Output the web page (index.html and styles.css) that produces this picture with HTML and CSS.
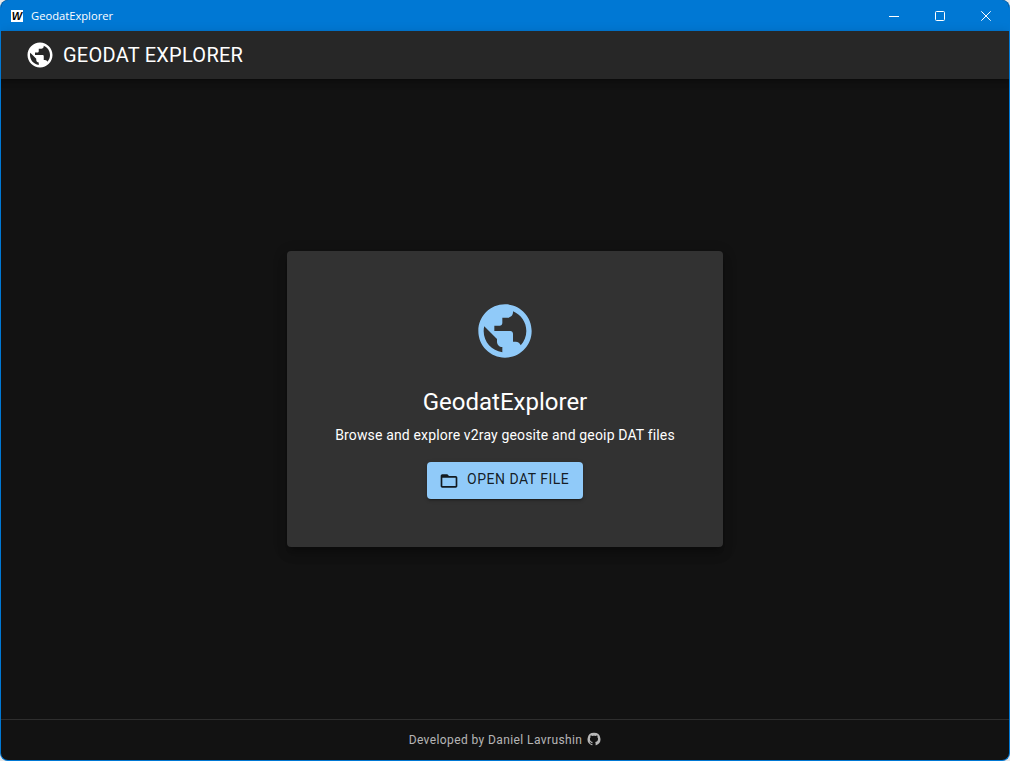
FILE: index.html
```html
<!DOCTYPE html>
<html lang="en">
<head>
<meta charset="utf-8">
<title>GeodatExplorer</title>
<link rel="stylesheet" href="styles.css">
</head>
<body>
<div class="window">
  <div class="titlebar">
    <div class="app-title">
      <span class="app-logo">W</span>
      <span class="app-name">GeodatExplorer</span>
    </div>
    <div class="win-controls">
      <span class="win-btn"><svg width="10" height="10" viewBox="0 0 10 10"><path d="M0 5.5h10" stroke="#fff" stroke-width="1" fill="none"/></svg></span>
      <span class="win-btn"><svg width="10" height="10" viewBox="0 0 10 10"><rect x=".5" y=".5" width="9" height="9" rx="1" stroke="#fff" stroke-width="1" fill="none"/></svg></span>
      <span class="win-btn"><svg width="10" height="10" viewBox="0 0 10 10"><path d="M.3.3l9.4 9.4M9.7.3L.3 9.7" stroke="#fff" stroke-width="1" fill="none"/></svg></span>
    </div>
  </div>
  <header class="appbar">
    <svg class="appbar-icon" viewBox="0 0 24 24"><path d="M12 2C6.48 2 2 6.48 2 12s4.48 10 10 10 10-4.48 10-10S17.52 2 12 2zm-1 17.93c-3.95-.49-7-3.85-7-7.93 0-.62.08-1.21.21-1.79L9 15v1c0 1.1.9 2 2 2v1.93zm6.9-2.54c-.26-.81-1-1.39-1.9-1.39h-1v-3c0-.55-.45-1-1-1H8v-2h2c.55 0 1-.45 1-1V7h2c1.1 0 2-.9 2-2v-.41c2.93 1.19 5 4.06 5 7.41 0 2.08-.8 3.97-2.1 5.39z"/></svg>
    <h1 class="appbar-title">GEODAT EXPLORER</h1>
  </header>
  <main class="main">
    <section class="card">
      <svg class="card-icon" viewBox="0 0 24 24"><path d="M12 2C6.48 2 2 6.48 2 12s4.48 10 10 10 10-4.48 10-10S17.52 2 12 2zm-1 17.93c-3.95-.49-7-3.85-7-7.93 0-.62.08-1.21.21-1.79L9 15v1c0 1.1.9 2 2 2v1.93zm6.9-2.54c-.26-.81-1-1.39-1.9-1.39h-1v-3c0-.55-.45-1-1-1H8v-2h2c.55 0 1-.45 1-1V7h2c1.1 0 2-.9 2-2v-.41c2.93 1.19 5 4.06 5 7.41 0 2.08-.8 3.97-2.1 5.39z"/></svg>
      <h2 class="card-title">GeodatExplorer</h2>
      <p class="card-text">Browse and explore v2ray geosite and geoip DAT files</p>
      <button class="open-btn" type="button">
        <svg class="open-icon" viewBox="0 0 24 24"><path d="M20 6h-8l-2-2H4c-1.1 0-1.99.9-1.99 2L2 18c0 1.1.9 2 2 2h16c1.1 0 2-.9 2-2V8c0-1.1-.9-2-2-2zm0 12H4V8h16v10z"/></svg>
        <span class="open-label">Open DAT File</span>
      </button>
    </section>
  </main>
  <footer class="footer">
    <span class="footer-text">Developed by Daniel Lavrushin</span>
    <svg class="gh-icon" viewBox="0 0 24 24"><path d="M12 1.27a11 11 0 00-3.48 21.46c.55.09.73-.28.73-.55v-1.84c-3.03.64-3.67-1.46-3.67-1.46-.55-1.29-1.28-1.65-1.28-1.65-.92-.65.1-.65.1-.65 1.1 0 1.73 1.1 1.73 1.1.92 1.65 2.57 1.2 3.21.92a2 2 0 01.64-1.47c-2.47-.27-5.04-1.19-5.04-5.5 0-1.1.46-2.1 1.2-2.84a3.76 3.76 0 010-2.93s.91-.28 3.11 1.1c1.8-.49 3.7-.49 5.5 0 2.1-1.38 3.02-1.1 3.02-1.1a3.76 3.76 0 010 2.93c.83.74 1.2 1.74 1.2 2.94 0 4.21-2.57 5.13-5.04 5.4.45.37.82.92.82 2.02v3.03c0 .27.1.64.73.55A11 11 0 0012 1.27"/></svg>
  </footer>
</div>
</body>
</html>
```
FILE: styles.css
```css
* { box-sizing: border-box; }
html, body { margin: 0; height: 100%; background: #e8e8e8; overflow: hidden; }
body { font-family: Roboto, "Liberation Sans", sans-serif; color: #fff; }
.window {
  height: 761px;
  display: flex;
  flex-direction: column;
  background: #121212;
  border: 1px solid #0078d4;
  border-top: 0;
  border-radius: 8px;
  overflow: hidden;
}
.titlebar {
  height: 31px;
  flex: none;
  background: #0078d4;
  display: flex;
  align-items: center;
  justify-content: space-between;
}
.app-title { display: flex; align-items: center; padding-left: 10px; }
.app-logo {
  width: 12px;
  height: 12px;
  background: #fff;
  color: #000;
  font: italic 700 11px/12px "Liberation Sans", sans-serif;
  text-align: center;
  margin-right: 8px;
}
.app-name { font: 400 11.2px/16px "Open Sans", sans-serif; color: #fff; }
.win-controls { display: flex; }
.win-btn {
  width: 46px;
  height: 31px;
  display: flex;
  align-items: center;
  justify-content: center;
}
.appbar {
  height: 48px;
  flex: none;
  background: #272727;
  padding: 0 24px;
  display: flex;
  align-items: center;
  box-shadow: 0 2px 4px -1px rgba(0,0,0,.2), 0 4px 5px 0 rgba(0,0,0,.14), 0 1px 10px 0 rgba(0,0,0,.12);
}
.appbar-icon { width: 30px; height: 30px; fill: #fff; margin-right: 8px; }
.appbar-title { margin: 0; font-size: 20px; font-weight: 400; line-height: 32px; letter-spacing: .25px; }
.main { flex: 1; display: flex; align-items: center; justify-content: center; }
.card {
  width: 436px;
  height: 296px;
  padding: 48px 0;
  background: #323232;
  border-radius: 4px;
  display: flex;
  flex-direction: column;
  align-items: center;
  box-shadow: 0 5px 5px -3px rgba(0,0,0,.2), 0 8px 10px 1px rgba(0,0,0,.14), 0 3px 14px 2px rgba(0,0,0,.12);
}
.card-icon { width: 64px; height: 64px; fill: #90caf9; flex: none; }
.card-title { margin: 23px 0 7px; font-size: 24px; font-weight: 400; line-height: 32px; }
.card-text { margin: 0 0 17px; font-size: 14px; line-height: 20px; letter-spacing: .15px; }
.open-btn {
  width: 156px;
  height: 37px;
  padding: 0 0 0 12px;
  display: flex;
  align-items: center;
  background: #90caf9;
  color: rgba(0,0,0,.87);
  border: 0;
  border-radius: 4px;
  font-family: inherit;
  font-size: 14px;
  font-weight: 400;
  letter-spacing: .5px;
  text-transform: uppercase;
  box-shadow: 0 3px 1px -2px rgba(0,0,0,.2), 0 2px 2px 0 rgba(0,0,0,.14), 0 1px 5px 0 rgba(0,0,0,.12);
}
.open-icon { width: 20px; height: 20px; fill: currentColor; margin-right: 8px; }
.open-label { margin-bottom: 3px; }
.footer {
  height: 41px;
  flex: none;
  border-top: 1px solid rgba(255,255,255,.12);
  display: flex;
  align-items: center;
  justify-content: center;
  gap: 5px;
  color: rgba(255,255,255,.7);
}
.footer-text { font-size: 12px; line-height: 20px; letter-spacing: .4px; }
.gh-icon { width: 14px; height: 14px; fill: currentColor; margin-bottom: 3px; }
```
